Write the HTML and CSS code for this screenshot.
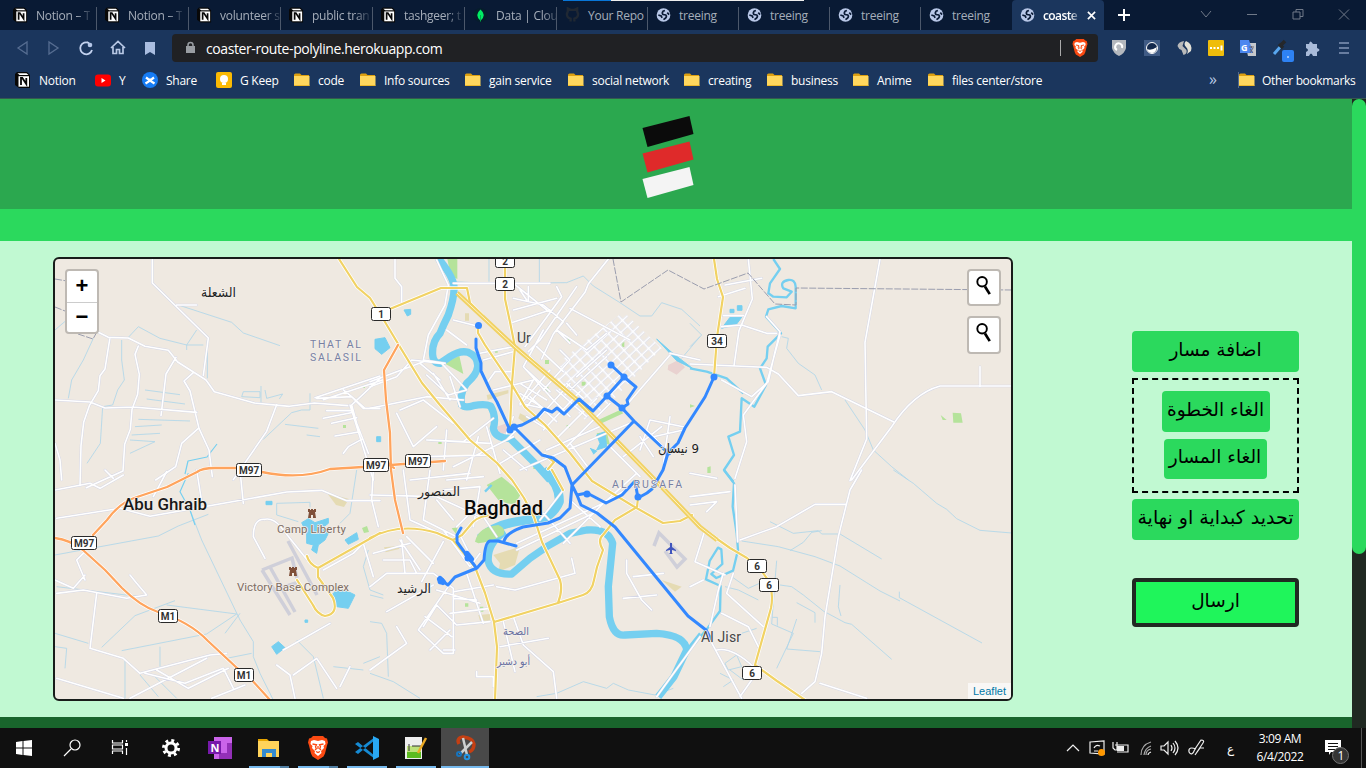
FILE: index.html
```html
<!DOCTYPE html>
<html lang="en">
<head>
<meta charset="utf-8">
<title>coaster-route-polyline</title>
<link rel="stylesheet" href="styles.css">
</head>
<body>
<svg class="defs" aria-hidden="true">
  <symbol id="notion" viewBox="0 0 16 16"><path d="M0 2 2 0h10l3 3v13H4l-4-3z" fill="#080808"/><path d="M2.500 1.300h9L13.500 3H4.500z" fill="#fff"/><path d="M3.500 4.200h10.500v10.500H3.500z" fill="#fff"/><path d="M6 13V6h1.300l4 6V6" fill="none" stroke="#080808" stroke-width="1.800"/></symbol>
  <symbol id="folder" viewBox="0 0 16 14"><path d="M0 2q0-1.500 1.500-1.500H6L7.500 2H15v3H0z" fill="#dda011"/><path d="M0 3h15.500v9.300q0 .7-.7.7H.700Q0 13 0 12.300z" fill="#ffd75e"/><path d="M0 12.500h15.500" stroke="#eeb92c"/></symbol>
  <symbol id="globe" viewBox="0 0 16 16"><circle cx="8" cy="8" r="7.300" fill="#b9c8e8"/><path d="M9.500 3.200 7.500 4Q6 6 7.500 7.500l3 .5q1.500 1.500-.5 3.500L8 13M2.500 8l3 1 1 2M12 5.500l2 2" fill="none" stroke="#0b1b36" stroke-width="1.800"/></symbol>
  <symbol id="brave" viewBox="0 0 20 24"><path d="M5 0h10l2 2 2 .5 1 4-1 3-2 8-1.500 3L10 24l-5.500-3.500L3 17.500l-2-8-1-3 1-4L3 2z" fill="#fb4a12"/><path d="m3 5 3-1 4 1 4-1 3 1 .5 3-2 2 .5 2-3 3 .5 2L10 20l-3.500-3 .5-2-3-3 .5-2-2-2z" fill="#fff"/><path d="m4.500 8 4 .8-1 2 .8 2L7 14M15.500 8l-4 .8 1 2-.8 2L13 14M8 15.500l2 1 2-1M10 10v3" fill="none" stroke="#fb4a12" stroke-width="1.300"/></symbol>
</svg>

<header class="browser">
  <div class="tabs">
    <div class="tab"><svg><use href="#notion"/></svg><span>Notion – T</span></div>
    <div class="tab"><svg><use href="#notion"/></svg><span>Notion – T</span></div>
    <div class="tab"><svg><use href="#notion"/></svg><span>volunteer s</span></div>
    <div class="tab"><svg><use href="#notion"/></svg><span>public tran</span></div>
    <div class="tab"><svg><use href="#notion"/></svg><span>tashgeer; t</span></div>
    <div class="tab"><svg viewBox="0 0 16 16"><circle cx="8" cy="8" r="7.500" fill="#061e2b"/><path d="M8 2q7 6 0 12-7-6 0-12" fill="#00ed64"/><path d="M8 8v7" stroke="#00a84c"/></svg><span>Data | Clou</span></div>
    <div class="tab"><svg viewBox="0 0 16 16"><path d="M6 15v-3q-4-1-4-5l1-3V1l3 1.500h4L13 1v3l1 3q0 4-4 5v3" fill="none" stroke="#202833" stroke-width="2.500"/></svg><span>Your Repo</span></div>
    <div class="tab plain"><svg><use href="#globe"/></svg><span>treeing</span></div>
    <div class="tab plain"><svg><use href="#globe"/></svg><span>treeing</span></div>
    <div class="tab plain"><svg><use href="#globe"/></svg><span>treeing</span></div>
    <div class="tab plain last"><svg><use href="#globe"/></svg><span>treeing</span></div>
    <div class="tab active"><svg><use href="#globe"/></svg><span>coaste</span><svg class="close" viewBox="0 0 10 10"><path d="m1 1 8 8M9 1 1 9" stroke="#fff" stroke-width="1.800"/></svg></div>
    <svg class="window-tools" viewBox="1103 0 263 30"><path d="M1117 15h12M1123 9v12" stroke="#fff" stroke-width="2"/><path d="m1200 11 5 6 5-6M1246 14.500h10M1292 12h7v7h-7zM1295 12V9.500h7v7h-3M1338 9.500l10 10M1348 9.500l-10 10" fill="none" stroke="#707988"/></svg>
  </div>
  <i class="loading"></i>
  <div class="toolbar">
    <svg class="nav" viewBox="0 30 172 36"><path d="M27 42v12l-9-6zM49 42v12l9-6z" fill="none" stroke="#566d91" stroke-width="1.300"/><path d="M89 43a6 6 0 1 0 3 7M87 42l4 3" fill="none" stroke="#c3d2ef" stroke-width="1.800"/><circle cx="90" cy="45" r="2.300" fill="#b5c7e8"/><path d="m111 48 7-6.500 7 6.500M113 47v6.500h3.500v-4h3v4h3.500V47" fill="none" stroke="#b8c8e5" stroke-width="1.700"/><path d="M145 42h10v13l-5-3-5 3z" fill="#a9bde0"/></svg>
    <div class="address"><svg viewBox="0 0 12 14"><rect x="1" y="5" width="9" height="7" fill="#999da2"/><path d="M3 6V4a2.500 2.500 0 0 1 5 0v2" fill="none" stroke="#999da2" stroke-width="1.500"/></svg><span>coaster-route-polyline.herokuapp.com</span><i></i><svg class="lion"><use href="#brave"/></svg></div>
    <svg class="extensions" viewBox="1098 30 268 36"><path d="M1112 40h14v8q-1 5-7 8-6-3-7-8z" fill="#b4b8be"/><path d="M1117 50a3.500 3.500 0 1 1 5-2" fill="none" stroke="#fff" stroke-width="2"/><path d="M1144 40h16v16h-16z" fill="#405b85"/><circle cx="1152" cy="48" r="5.500" fill="#14294d" stroke="#fff"/><path d="M1147 49q4 2 10-2-1 6-5 6-4 0-5-4" fill="#fff"/><path d="M1184 41q-6 1-6.500 5 1 3 4 4l2 5q4-1 3-5l-4-4z" fill="#b8b9ba"/><path d="M1186 41q7 3 5 10l-4 3q2-4-1-7-3-3 0-6" fill="#e3e1d7"/><rect x="1208" y="40" width="16" height="16" rx="1" fill="#efbd0b"/><path d="M1210 48h2m1.500 0h2m1.500 0h2M1221.500 45.500v5" stroke="#fff" stroke-width="2"/><path d="M1245 43h11v13h-8" fill="#c5c8cc"/><path d="M1240 40h9l4 13h-13z" fill="#4c87ef"/><text x="1241" y="51" font-size="9" fill="#fff" font-weight="bold">G</text><path d="M1249 47h5M1251.500 46v2M1253 48l-3 5M1250 49l3 4" stroke="#667" fill="none"/><path d="m1274 54 7-8" stroke="#59a7ef" stroke-width="3"/><path d="m1279 44 4 4m-2-3 4-4" stroke="#25272a" stroke-width="3.500"/><rect x="1282" y="50" width="12" height="12" rx="2" fill="#2e82f4"/><path d="M1287 57h2" stroke="#fff"/><path d="M1306 44h3q1-5 4 0h4v4q5 2 0 4v4h-4q-2-5-4 0h-3v-4q4-2 0-4z" fill="#a9bbd9"/><path d="M1339 43h10M1339 48h10M1339 53h10" stroke="#8295b7" stroke-width="1.500"/></svg>
  </div>
  <nav class="bookmarks">
    <div class="w80"><svg><use href="#notion"/></svg>Notion</div>
    <div class="w47"><svg viewBox="0 0 16 16"><rect y="2.500" width="16" height="12" rx="3" fill="#f00"/><path d="m6.500 6 4 2.500-4 2.500z" fill="#fff"/></svg>Y</div>
    <div class="w74"><svg viewBox="0 0 16 16"><circle cx="8" cy="8" r="8" fill="#167cf5"/><path d="m3.500 11.500 4.500-3 4.500 3M4 5.500l2 1.500 2 1 2-1 2-1.500" fill="none" stroke="#fff" stroke-width="2.200"/></svg>Share</div>
    <div class="w78"><svg viewBox="0 0 16 16"><rect width="16" height="16" rx="2" fill="#fbba04"/><circle cx="8" cy="7" r="4" fill="#fff"/><path d="M6 12h4" stroke="#fff" stroke-width="2"/></svg>G Keep</div>
    <div class="w66"><svg><use href="#folder"/></svg>code</div><div class="w105"><svg><use href="#folder"/></svg>Info sources</div><div class="w103"><svg><use href="#folder"/></svg>gain service</div><div class="w116"><svg><use href="#folder"/></svg>social network</div><div class="w83"><svg><use href="#folder"/></svg>creating</div><div class="w86"><svg><use href="#folder"/></svg>business</div><div class="w75"><svg><use href="#folder"/></svg>Anime</div><div class="files"><svg><use href="#folder"/></svg>files center/store</div>
    <b>»</b><i></i><div class="other"><svg><use href="#folder"/></svg>Other bookmarks</div>
  </nav>
</header>

<div class="viewport">
  <div class="site">
    <div class="brand"><svg viewBox="640 114 56 86"><path d="m642.500 128 47-12 4 18-46 13z" fill="#0b0b0b"/><path d="m642.500 153.500 47-12 4 18-46 13z" fill="#df2a2a"/><path d="m642.500 179 47-12 4 18-46 13z" fill="#f4f4f4"/></svg></div>
    <div class="band"></div>
    <main>
      <section class="map">
        <svg viewBox="55 259 956 440">
          <defs>
            <pattern id="blocks" width="29" height="23" patternUnits="userSpaceOnUse" patternTransform="rotate(-43)"><path d="M0 4h29M4 0v23" stroke="#d5d7e6" stroke-width="8"/><path d="M0 4h29M4 0v23" stroke="#fff" stroke-width="5.500"/></pattern>
            <g id="streets">
              <g transform="translate(50 250) scale(.33333)">
                <path d="M307 27v72l168 165-15 112M380 165h60M145 247l30 15 60 2 50 25 70 12 28 35 85 54 25 35 120 34 105 10 75-10 100 8M15 450l105 6 45 18 85-3 190 16M180 262l-15 95-15 20-5 45-27 45-17 50-8 70-3 120M265 288l-10 25 13 60-5 60-17 45-5 60-17 45-5 80-110 50M378 322l-30 50-15 125M430 368l-28 25 18 30 27 112 30 65 10 80M445 535l-50 45-18 70-60 40M680 464l-30 80-100 145M795 443l195-65M820 449l180-60M905 465l85-80M800 445l105-5 35 35h50M880 420l25 20 40 35M905 465l15 55 35 90M830 482h75M820 505l83-17M845 520l75-17M855 558l75-13M880 610l15-20 40-22M165 660l25 25M15 580l15 50 5 60M900 465l70 225"/>
              </g>
              <g transform="translate(370 250) scale(.33333)">
                <path d="M200 30l35 75-10 60-50 90-15 75 65 10M0 410l80-30 45-50 90 10 75 80-55 15-65-60M0 475l170-35 110 10M90 480l70-30 90 70M80 490l50 100 70-60M75 25v60l20 25v45M250 100h290M250 210l80 20M230 240l60 45M430 180l130-35M430 145l90 20 60 50-20 25 90 60 60-50M420 220l120-40M430 100l100 80M450 120l20 30M475 110v45M560 110l15 30-110 150M620 110l-110 160-35 35M715 27l-60 75-10 25-95 125-35 75M330 310l100-20M340 330l90-25M350 400l25-35h50M370 420l120-30-40 70 70 15M450 400l80 50M450 430l80 50M540 360l-90 105M520 240l-60 110 90 100M600 330l-80 90M600 175l180 95M470 500l65 40M450 660l330-140M530 600l170-75M600 580l60 80M720 590l90 90M810 600l30-90 100 20M850 560l90-20M760 620l115-90M880 640l20-140M180 570l100 5 90-70M230 540l-10 120M160 620l200-5M250 650l180-90M290 690l35-130M400 600l70 60M390 640l120-70M350 530l40 140M170 570l190 10M0 395l160-60M900 310l90 20M900 315l-130 150M560 240l40 40M590 220l30 35M570 300l30 30M500 290l80 75M480 320l80 75M470 360l70 65M620 380l90-80M600 420l110-100M590 400l50 45M560 420l90 80M540 440l60 60M470 470l40-50M660 480l30 40M810 560l40 60M830 540l50 50M240 380l30 90M190 370l50 80M150 340l60 50M430 500l-20 50M450 530l-40 40"/>
                <path d="M500 510l100-110M520 540l110-115M560 565l120-120M590 590l130-130M480 440l80 75" />
              </g>
              <g transform="translate(690 250) scale(.33333)">
                <path d="M0 342l230 10 35 20 60 65 100-12 185 90M175 27l12 120-40 95-15 105M105 105l110-20M85 140l80-25M570 27l-45 250 5 290-50 125M485 690l120-160q65-100 145-122h215M870 350v60M270 255l-40 145-70 95 10 80-35 110M230 200l40 45-15 60-20 90-50 45-90-50M100 197h60M95 230l60-5 75 25h30"/>
              </g>
              <g transform="translate(50 470) scale(.33333)">
                <path d="M20 145l190-30 90 24 410-73 105-5 75 31h100M140 370l-20 165 100 30 50 45 210-55 50-5M285 610l120 30 115-45 30 60M20 625l200 60M240 685l230-120M15 330l55 25 35-40M100 250l-20 20 25 60M20 370l80-10 130 25 60-10-30-35-20-25M320 600l95 55 120-60M485 685l100-40M645 265l-35-65q0-55 35-52 22-5 45 20l80 100M700 540l140-80M820 300l90-50 30-30 30 100M680 585l40 30 15 70M730 615l70-50 60 90M870 650l30-60M15 60l105-20 30 15 70-40M310 80l40-75M440 0l15 95M570 0l10 100M970 0l-5 90 20 80"/>
              </g>
              <g transform="translate(370 470) scale(.33333)">
                <path d="M0 75l200 5 130 60M100 0l20 150 100 45M180 0l-20 150 100 50M230 30l110-10M120 30l180-20M220 60l110-10M200 90l50 60M260 170l60-60 60 90M0 350l50-40h140l60 45v195h-30l-75-70 90-130M50 425l140-80M90 210l60 90M10 250l110-30M40 270h80l20 40M95 210l10 100M110 200l80 80M160 470l40-65 60 60 100-10M200 360l130 40M165 440l80 60M180 540l60-60M240 430l120-15M250 385l70 5M250 365l120-20M290 310l50 150M380 350l55 10 180-50-10-45M400 455l35 150M430 440l30 85 90 80 10 80M390 530l145-25M320 605v15h50v30M440 220l260-120 100-60M510 150l70-90M580 220l120-120 100-90M770 270v40l45 80 30 30M790 320l90-10M760 385l100-10M990 500l-130 180M220 540h35M220 180l80 110 30-40M265 185l40 80M220 215l-65 120M330 50l-20 120M440 240l230-110M520 130l80 90M600 90l90 80M0 600l110-80-30-50"/>
              </g>
              <g transform="translate(690 470) scale(.33333)">
                <path d="M515 0l-35 60-35 140-40 240-10 110-20 85-40 35M150 210l110-40 115-67h95M0 80l120-15M0 105l80-10-30 30M0 10l80 15M45 180l-30 95 90 40M130 310l-20 60 110 100M95 430l80 40 30 60M0 350l40-20M55 500l100 185M80 540q45-10 110 50M185 630l-35 50M390 640l140 45M135 45l8 170M100 310l-15 50-25 110"/>
              </g>
            </g>
            <g id="highways">
              <path d="M339 259 357 287 370 298 385 322 400 347 422 383 440 405 470 440 497 463 512 480 524 498 534 517 542 542 560 580Q563 590 558 603M385 311 441 288H467L470 303 482 315M478 327v6l7 12 27 40 13 22 20 18 25 28 22 28 41 25 30 17 17-2 12-6M505 259v40l5 23 5 25-3 36-2 44M714 259l3 20 6 18-6 40-3 40M370 538Q400 522 437 533L453 540 462 535 473 522Q480 515 495 515M453 540 475 567 485 593 494 622 497 647 495 700M494 622 558 603 583 595Q592 592 594 580L597 567 603 550Q597 540 603 535L615 520 637 507 638 498M380 533 318 568Q309 564 307 556M318 568v9L333 598Q339 614 325 616 317 614 313 605L297 580M552 470l11 20M700 527l30 21 17 10 16 15q12 14 8 35L755 665 777 681 805 700M545 455l9 7-6 7"/>
            </g>
            <g id="motorways"><path d="M55 538Q70 540 83 550L105 570 122 588Q140 606 158 612 190 622 208 641L237 668 250 678 270 700M93 535 107 520Q120 502 137 497L167 487 197 472Q202 468 215 468H237Q250 470 262 472 300 480 330 469L363 467 445 461M398 345 384 370 386 400 390 433 391 470 395 500 403 533M386 461l8 7"/></g>
          </defs>

          <g class="areas">
            <g transform="translate(370 250) scale(.33333)"><path d="M232 27h30v60l-20-10zM223 340l45-23 12 55zM680 550l30-5 10 40-30-10zM685 510l65-30 10 10-65 30zM590 265h10v10h-10zM525 330h12v12h-12zM635 395h12v12h-12zM755 275h8v16h-8zM590 525h10v8h-10zM205 572h10v10h-10zM375 300h8v8h-8zM525 410h10v15h-10zM490 645h20v12h-20z"/><path class="sand" d="M285 190h12v22h-12zM350 435l65-15v10l-62 20zM450 490l30 15-15 15-20-15z"/><path class="rose" d="M895 345l30-15 20 22-25 22-27-15zM380 530l30-10 5 25-25 10z"/></g>
            <g transform="translate(690 250) scale(.33333)"><path d="M752 495l18 15h-12zM788 488l25 2 5 28h-28zM0 463l15 5-15 5zM52 652l10-3v20H52z"/></g>
            <g transform="translate(370 470) scale(.33333)"><path d="M350 45l45-25 60 50-20 30-50-10zM245 175l18-3-5 20zM650 10l25 15M285 400h10v10h-10zM330 410h10v15h-10z"/><path class="sand" d="M370 255l80-25-15 55-50 20 5-25zM42 232l50-5-5 10-40 10zM325 435l35-3v20h-30zM875 330l60 20-20 15z"/></g>
            <path class="sand" d="M327 493l22 6-5 8-8-2z"/>
            <path d="M362 528l5-2 2 6-5 1zM363 385h2v3h-2zM343 425h3v3h-3z"/>
          </g>
          <g class="airport"><path d="M288 541l29 54M262 570l28 45M270 567l25 45M262 570l30-12 5 20M275 590l24-8M654 546l5-13 26 26-8 8-12-16"/></g>

          <g class="canals">
            <g transform="translate(50 250) scale(.33333)"><path d="M15 240l35-30M130 265l-30 65-35 60-10 55M385 165l160 52 35 32 110 38M472 270v115M235 262l30-32 65 35 80 20h50M410 300v-15l30-45M215 270v60l8 60-20 30-15 45-30 5-7 110-40 60M285 420l105 14M290 447l115 15M265 508l155 5M255 530l80-5M245 555l85-5M240 570l75 5-75 35M580 425h50v18l-55-3zM633 408v50M645 420l5 25 48-13-10 15M780 430v50h-25l-30 8-85 80M705 523l100 12M770 555l40 5"/></g>
            <g transform="translate(370 250) scale(.33333)"><path d="M250 95l100 5 240-2 50-20 30 30 80 50 60 40h35l30-40 60 20 55 50M508 27v70M357 25v70M990 260l-55 65"/></g>
            <g transform="translate(690 250) scale(.33333)"><path d="M275 260l20 5-5 30 35 45 50 35 20 45M465 450l60 90 25 60 55 50 50 40M0 220l35 35-35 35"/></g>
            <g transform="translate(50 470) scale(.33333)"><path d="M15 255l310-57 60-30 90-35M350 405l210 27-90 60-255 50M155 532l100-95 120-45M420 120l35 90 115 240 40 65v45l20 50 40 80M15 490l100 30M20 350l250 30M225 570v115M270 615l55 65M310 615l70 70M330 530v60M530 565l75-15M15 530l35 5-5 60M740 510l50 50 30 125M850 590l90 10M940 580l50-20M955 240l-15 50 20 70 40 15M680 100l100-3v15M680 100v35l65 20M570 430l-45 60M920 0l-20 130-30 30"/></g>
            <g transform="translate(370 470) scale(.33333)"><path d="M0 375l40 10M0 455l35 5 15 30 5 130M0 610l70 25 80 50M500 680l60-10 80-35 70 20 20-15 45 20 80 15 55-20"/></g>
            <g transform="translate(690 470) scale(.33333)"><path d="M610 0l60 40 70 60 30 18 30 28 70 35 95 8M240 155l70 35 75-8 10 10h55l125 75M155 213l110 17 110 30 75 28 80 50 40 25 60 30M628 365v18l248 136M300 242l40-25 25-30 30-5M450 345l-5 65 8 28M270 345l35 5 35 25 60 48 65 35 20 5 120 105M320 398l55 30v30M260 272l-5 60-10 130 65 28-50 105M247 442h15v25M125 320l50 35 45-20 30 10M105 350l40 10 60 30M320 447l-30 90 100 8M200 475l-45 15M105 580l35-25 15 35-40 10zM90 610l40 20-30 20M120 600l40 30"/></g>
          </g>
          <g class="water">
            <g transform="translate(370 250) scale(.33333)"><path class="tigris" d="M205 25Q250 80 252 110T235 195Q220 225 210 250 185 275 188 315 190 340 210 340L240 320Q270 300 295 307 325 320 323 350 320 375 290 400 268 430 275 465 285 475 310 467 345 460 362 468 380 500 370 535 375 565 420 565L460 605 500 645 540 690"/><path class="blob" d="M15 268l30-5 15 30-25 20-20-17zM102 180l20-2v15l-10 5zM20 560h12v15H20zM680 555l25-10 5 45-30 10 10-20zM660 595l20 8-10 10M860 267l45 40 65 50-50-25z"/></g>
            <g transform="translate(370 470) scale(.33333)"><path class="tigris broad" d="M520 0Q570 45 568 95 555 125 530 140L440 155Q375 165 330 205"/><path class="tigris" d="M405 185Q350 220 355 275 365 315 425 312L480 265 530 230 600 190 650 180Q715 175 728 220L715 350 718 440Q730 500 765 495L860 490Q945 495 950 540L912 620 865 680"/><path class="island" d="M315 215q10-45 70-50 25 10 15 30-35 20-75 25zM373 65l15-30 20 5 0 45-20-10zM400 80q20-20 40 0l-5 20q-15 5-35-5z"/><path d="M990 490l-40 50M345 65l20-20" class="diyala"/></g>
            <g transform="translate(690 250) scale(.33333)"><path class="diyala" d="M250 27l20 30-30 43-5 30 15 10 40 2 15-17-25-10q-12-20 15-25 20-3 22 20v65l-42-7-40 10-7 22 45 50-40 40-3 35-20 30 18 50-35 65-38-25-5 100-35 15 17 55-30 45 28 35M0 355l50 10 60 20 50 45"/><path class="blob" d="M95 235l25-33h35l-15 20zM120 178h12v10h-12zM142 167h14v14h-14z"/></g>
            <g transform="translate(690 470) scale(.33333)"><path class="diyala" d="M102 0l30 40-4 70 12 80 4 50-15 62-50 22-15-12 33-30-3-44-10-5-25 40-11 55 44 20-2 75-40 55-50 60"/></g>
            <g transform="translate(50 470) scale(.33333)"><path class="blob" d="M648 94h18v10h-18zM755 158l20-12 20 12 40-13v15l-20 15 20 15-10 20-20 15-5 25-15-10 5-15-20-5v-30zM885 210l35-22 5 20-30 15zM665 530l20-15 20 18-25 20zM765 450h8v7h-8zM845 375l20-20 30 10 20 10-20 40-35-5z"/><path d="M435 165l-15-45-30-55 20-45 5-10" class="creek"/></g>
            <path d="M217 444l-10 13-19 4-3 13" class="creek narrow"/>
          </g>

          <g transform="translate(370 250) scale(.33333)"><path d="M575 330l185-145 115 110-155 165-70 55-55-60-40-35z" fill="url(#blocks)"/></g>
          <use href="#streets" class="street-case"/><use href="#streets" class="street"/>
          <use href="#highways" class="highway-case"/><use href="#highways" class="highway"/>
          <path class="express" d="M457 293 515 347 577 400 655 480 700 527 717 540"/><path class="median" d="M457 293 515 347 577 400 655 480 700 527 717 540"/>
          <use href="#motorways" class="highway-case"/><use href="#motorways" class="motorway"/>
          <path class="boundary" d="M55 279l12 2M55 307l10 4M78 334l15 5 5-9M613 259l8 43 47-32 36 19 44-16 27 31 21 1v-17l216 2"/>

          <g class="routes">
            <path d="M476 339v9l5 15v8L490 390 497 402 510 430M514 427 522 425 537 417 544 409 552 412 557 408 564 414 579 399 593 411 607 396 624 377 636 387 627 400 628 404 622 408 607 396M611 365 624 377M622 408 634 421 668 453 678 443 685 428 705 397 714 377M668 453 663 470 652 489 647 493 638 498 636 487 638 483 635 481 622 495 606 503 587 493 577 495M634 421 572 485M514 427 542 455 553 458 565 467 572 485 570 508 560 518 548 523 523 527Q506 533 504 541M572 485 577 495 581 505 597 513 615 527 688 616 706 630 711 639M516 546 498 541H490Q485 542 484 560L477 568 455 577 448 585 441 580M461 528 457 535V542L468 557 475 566"/>
            <path d="M467 554l4 5M440 579l3 3" class="thick"/>
            <g><circle cx="478.500" cy="325.500" r="3.500"/><circle cx="510" cy="430" r="3.500"/><circle cx="514" cy="427" r="3.500"/><circle cx="611" cy="365" r="3.500"/><circle cx="624" cy="377" r="3.500"/><circle cx="607" cy="396" r="3.500"/><circle cx="622" cy="408" r="3.500"/><circle cx="714" cy="377" r="3.500"/><circle cx="668" cy="452" r="3.500"/><circle cx="587" cy="494" r="3.500"/><circle cx="638" cy="497" r="3.500"/><circle cx="468" cy="558" r="3.500"/><circle cx="441" cy="581" r="3.500"/></g>
          </g>
          <g class="labels">
            <text x="201" y="297" class="ar" textLength="35" lengthAdjust="spacingAndGlyphs">الشعلة</text><text x="310" y="348" class="area" textLength="52">THAT AL</text><text x="310" y="361" class="area" textLength="52">SALASIL</text>
            <text x="517" y="343" class="town">Ur</text><text x="658" y="453" class="ar" textLength="41" direction="rtl" text-anchor="end" lengthAdjust="spacingAndGlyphs">9 نيسان</text><text x="612" y="488" class="area" textLength="71">AL RUSAFA</text>
            <text x="123" y="510" class="city" textLength="84" lengthAdjust="spacingAndGlyphs">Abu Ghraib</text><text x="464" y="515" class="capital" textLength="79" lengthAdjust="spacingAndGlyphs">Baghdad</text>
            <text x="418" y="496" class="ar" textLength="42" lengthAdjust="spacingAndGlyphs">المنصور</text><text x="397" y="593" class="ar" textLength="34" lengthAdjust="spacingAndGlyphs">الرشيد</text><text x="503" y="635" class="ar small" textLength="26" lengthAdjust="spacingAndGlyphs">الصحة</text><text x="497" y="665" class="ar small" textLength="33" lengthAdjust="spacingAndGlyphs">أبو دشير</text>
            <text x="277" y="533" class="base" textLength="69">Camp Liberty</text><text x="237" y="591" class="base" textLength="112" lengthAdjust="spacingAndGlyphs">Victory Base Complex</text><text x="701" y="642" class="town" textLength="40">Al Jisr</text>
            <path class="castle" d="M308 509h2v1h1v-1h2v1h1v-1h2v3h-1l1 6h-3v-3h-2v3h-3l1-6h-1zM289 567h2v1h1v-1h2v1h1v-1h2v3h-1l1 6h-3v-3h-2v3h-3l1-6h-1z"/><path d="M670 543h2v4l4 3v1l-4-1v3l1 1h-4l1-1v-3l-4 1v-1l4-3z" fill="#4055bd"/>
          </g>
          <g class="shields">
            <g transform="translate(381 314)"><rect x="-9.500" y="-6.500" width="19" height="13" rx="2"/><text>1</text></g><g transform="translate(505 261)"><rect x="-9.500" y="-6.500" width="19" height="13" rx="2"/><text>2</text></g><g transform="translate(505 284)"><rect x="-9.500" y="-6.500" width="19" height="13" rx="2"/><text>2</text></g><g transform="translate(717 341)"><rect x="-9.500" y="-6.500" width="19" height="13" rx="2"/><text>34</text></g>
            <g transform="translate(249 470)"><rect x="-12.500" y="-6.500" width="25" height="13" rx="2"/><text>M97</text></g><g transform="translate(376 465)"><rect x="-12.500" y="-6.500" width="25" height="13" rx="2"/><text>M97</text></g><g transform="translate(418 461)"><rect x="-12.500" y="-6.500" width="25" height="13" rx="2"/><text>M97</text></g><g transform="translate(84 543)"><rect x="-12.500" y="-6.500" width="25" height="13" rx="2"/><text>M97</text></g>
            <g transform="translate(168 616)"><rect x="-9.500" y="-6.500" width="19" height="13" rx="2"/><text>M1</text></g><g transform="translate(244 675)"><rect x="-9.500" y="-6.500" width="19" height="13" rx="2"/><text>M1</text></g><g transform="translate(757 566)"><rect x="-9.500" y="-6.500" width="19" height="13" rx="2"/><text>6</text></g><g transform="translate(769 585)"><rect x="-9.500" y="-6.500" width="19" height="13" rx="2"/><text>6</text></g><g transform="translate(752 673)"><rect x="-9.500" y="-6.500" width="19" height="13" rx="2"/><text>6</text></g>
          </g>
        </svg>
        <div class="zoom"><span>+</span><span>−</span></div>
        <div class="finders"><div><svg viewBox="0 0 16 22"><circle cx="6" cy="6" r="5" fill="none" stroke="#000" stroke-width="2"/><path d="m9 11 5 8" stroke="#000" stroke-width="2.800"/></svg></div><div><svg viewBox="0 0 16 22"><circle cx="6" cy="6" r="5" fill="none" stroke="#000" stroke-width="2"/><path d="m9 11 5 8" stroke="#000" stroke-width="2.800"/></svg></div></div>
        <div class="leaflet">Leaflet</div>
      </section>
      <aside>
        <button>اضافة مسار</button>
        <div class="cancel"><button class="step">الغاء الخطوة</button><button class="path">الغاء المسار</button></div>
        <button class="ends">تحديد كبداية او نهاية</button>
        <button class="send">ارسال</button>
      </aside>
    </main>
    <footer></footer>
  </div>
  <div class="scroll"><i></i></div>
</div>

<div class="taskbar">
  <svg class="apps" viewBox="0 728 490 40">
    <path d="m16 742 6.500-1v6.500H16zM23.500 741l8.500-1v7.500h-8.500zM16 748.500h6.500v6.500l-6.500-1zM23.500 748.500H32v7.500l-8.500-1z" fill="#fff"/>
    <g fill="none" stroke="#fff" stroke-width="1.200"><circle cx="75" cy="745" r="5"/><path d="m71 749-7 7M112.500 740v3h10v-3M112.500 754v-3h10v3M112.500 745h10v4h-10zM126.500 740v2M126.500 748v7"/><circle cx="171" cy="748" r="5" stroke-width="3"/><circle cx="171" cy="748" r="7.500" stroke-width="3" stroke-dasharray="2.900 3"/></g><path d="M125 743h3v3h-3z" fill="#fff"/>
    <path d="M214 737h18v22h-18z" fill="#ca64ea"/><path d="M227 743h5v5h-5zM227 748h5v11h-13v-6h8z" fill="#9330b8"/><path d="M208 741h13v13h-13z" fill="#7719aa"/><text x="210.500" y="752" fill="#fff" font-weight="bold" font-size="11">N</text>
    <path d="M258 739h9l2 2h10v16h-21z" fill="#e7a500"/><path d="M258 741h21v16h-21z" fill="#ffd35a"/><path d="M262 749h14v8h-4v-4h-6v4h-4z" fill="#348bd0"/>
    <use href="#brave" x="308" y="736" width="20" height="24"/>
    <path d="m355 744 3-2 17 14v3zM355 752l3 2 17-14v-3z" fill="#168bd4"/><path d="m373 736 6 3v18l-6 3z" fill="#29a9f5"/>
    <path d="M405 737h17v22h-17z" fill="#eee"/><path d="M407 752h14v6h-14z" fill="#5cbb20"/><path d="M407 746h14v6h-14z" fill="#bde17a"/><path d="M409 744v7M412 746h9" stroke="#333"/><path d="m418 753 8-15" stroke="#edaa24" stroke-width="2.500"/>
    <path d="M441 728h48v40h-48z" fill="#494949"/><path d="M459 744q-3-6 4-7 10 1 11 7 0 6-5 8" fill="none" stroke="#c43f13" stroke-width="3.500"/><path d="m463 738 4 17M472 742l-12 12" stroke="#ccd0d1" stroke-width="2.500"/><circle cx="459" cy="754" r="2" fill="none" stroke="#1674be" stroke-width="2"/><circle cx="467" cy="757" r="2.300" fill="none" stroke="#2594e2" stroke-width="2"/>
    <path d="M249 767h31M298 767h31M347 767h40M396 767h40M441 767h48" stroke="#76b9ed" stroke-width="2"/><path d="M280 767h9M329 767h9" stroke="#517fa3" stroke-width="2"/>
  </svg>
  <svg class="tray" viewBox="1060 728 180 40"><g fill="none" stroke="#eee" stroke-width="1.200"><path d="m1067 751 6-6 6 6M1090 742l14-1v13l-14-1zM1094 751h4M1094 748q2-4 6-2M1115 745h13v7h-11M1113 742v6l2 2h2v-8M1148 755q0-2 3-3M1161 746h3l4-4v12l-4-4h-3zM1171 745q2 3 0 6M1173 743q4 5 0 10M1175 741q6 7 0 14M1196 749q-8-3-7 3 3 5 6-3l6-9q4 0 2 3l-8 12 5-7h4"/><path d="M1141 755q0-10 10-13M1144 755q1-7 7-9M1146 755q0-5 5-6" stroke="#aaa"/></g><path d="M1117 746h7v5h-7z" fill="#eee"/><circle cx="1101.500" cy="752.500" r="3.500" fill="#ff9800"/><text x="1227" y="753" class="lang">ع</text></svg>
  <div class="clock">3:09 AM<br>6/4/2022</div>
  <svg class="notify" viewBox="1320 728 46 40"><path d="M1325 740h16v12h-10l-2 3v-3h-4z" fill="#fff"/><path d="M1328 743.500h10M1328 746.500h10M1328 749.500h7" stroke="#111"/><circle cx="1340.500" cy="755.500" r="8" fill="#353535" stroke="#747474"/><text x="1337.500" y="760" font-size="12" fill="#fff">1</text><path d="M1361.500 728v40" stroke="#555"/></svg>
</div>
</body>
</html>
```

FILE: styles.css
```css
* { box-sizing: border-box; }
body { margin: 0; width: 1366px; height: 768px; overflow: hidden; font-family: "Open Sans", "Noto Sans", "DejaVu Sans", sans-serif; }
svg { display: block; flex: none; }
.defs { position: absolute; width: 0; height: 0; }
.browser { height: 98px; background: #1b365d; color: #fff; position: relative; }
.tabs { height: 30px; display: flex; background: #091a34; }
.tab { flex: none; width: 92px; height: 30px; display: flex; align-items: center; padding-left: 13px; gap: 8px; font-size: 12px; letter-spacing: -.25px; color: #a6aeba; position: relative; }
.tab:first-child { width: 97px; }
.tab:nth-child(n+7) { width: 91px; }
.tab:nth-child(n+2) { padding-left: 8px; }
.tab::after { content: ""; position: absolute; right: 0; top: 7px; bottom: 0; width: 1px; background: #4c586b; }
.tab > svg { width: 15px; height: 16px; }
.tab span { white-space: nowrap; mask-image: linear-gradient(90deg, #000 75%, rgba(0, 0, 0, .2)); }
.tab.plain span, .tab:nth-child(7) span { mask-image: none; }
.tab.last::after, .tab.active::after { display: none; }
.tab.active { width: 92px; padding-left: 8px; background: #1b365d; color: #fff; border-radius: 4px 4px 0 0; font-weight: 600; letter-spacing: -.6px; }
.tab.active span { width: 36px; }
.tab .close { width: 9px; height: 9px; margin-left: 0; }
.window-tools { width: 263px; height: 30px; }
.loading { position: absolute; left: 563px; top: 0; width: 241px; height: 1px; background: linear-gradient(90deg, #0876d8 48px, #eee 48px); }
.toolbar { display: flex; height: 36px; align-items: center; }
.nav { width: 172px; height: 36px; }
.address { width: 926px; height: 28px; border-radius: 4px; background: #202124; display: flex; align-items: center; padding-left: 13px; }
.address > svg:first-child { width: 12px; height: 14px; }
.address span { font-size: 14px; margin-left: 9px; letter-spacing: -.4px; white-space: nowrap; }
.address i { width: 1px; height: 16px; background: #aaa; margin-left: auto; }
.address .lion { width: 16px; height: 18px; margin: 0 10px 0 11px; }
.extensions { width: 268px; height: 36px; }
.bookmarks { height: 32px; display: flex; align-items: center; padding: 0 0 4px 15px; font-size: 12px; letter-spacing: -.25px; white-space: nowrap; }
.bookmarks div { display: flex; align-items: center; gap: 8px; flex: none; }
.bookmarks svg { width: 16px; height: 16px; }
.bookmarks b { margin: -3px 0 0 167px; font-size: 16px; font-weight: 400; width: 20px; color: #b8c9e6; }
.bookmarks i { width: 1px; height: 16px; margin-left: 9px; background: #536b8d; }
.bookmarks .other { margin-left: 0; gap: 7px; letter-spacing: -.35px; }
.bookmarks .w80 { width: 80px; } .bookmarks .w47 { width: 47px; } .bookmarks .w74 { width: 74px; } .bookmarks .w78 { width: 78px; }
.bookmarks .w66 { width: 66px; } .bookmarks .w105 { width: 105px; } .bookmarks .w103 { width: 103px; } .bookmarks .w116 { width: 116px; }
.bookmarks .w83 { width: 83px; } .bookmarks .w86 { width: 86px; } .bookmarks .w75 { width: 75px; } .bookmarks .files { width: 114px; }

.viewport { height: 630px; display: flex; border-top: 1px solid #34594f; }
.site { width: 1352px; }
.brand { height: 110px; background: #2ba84f; padding: 15px 0 0 640px; }
.brand svg { width: 56px; height: 86px; }
.band { height: 32px; background: #2bd95d; }
main { height: 476px; background: #c1f9d2; padding: 16px 0 0 53px; display: flex; align-items: flex-start; }
footer { height: 11px; background: #19652c; }
.scroll { width: 14px; background: #202922; }
.scroll i { display: block; height: 455px; border-radius: 7px; background: #2bd95d; }
.map { width: 960px; height: 444px; border: 2px solid #181d1a; border-radius: 6px; overflow: hidden; position: relative; background: #efe9e1; }
.map > svg { width: 956px; height: 440px; }
.zoom { position: absolute; left: 10px; top: 10px; width: 34px; height: 65px; border: 2px solid #beb9b3; border-radius: 4px; background: #fff; display: grid; grid-template-rows: 31px 30px; font: bold 22px "Liberation Sans"; text-align: center; line-height: 30px; }
.zoom span + span { border-top: 1px solid #ccc; line-height: 27px; }
.finders { position: absolute; right: 10px; top: 10px; display: flex; flex-direction: column; gap: 9px; }
.finders div { width: 34px; height: 38px; border: 2px solid #beb9b3; border-radius: 4px; background: #fff; display: grid; place-items: center; padding-bottom: 3px; }
.finders div:first-child { height: 37px; margin-bottom: 1px; }
.finders svg { width: 16px; height: 21px; }
.leaflet { position: absolute; right: 0; bottom: 0; width: 43px; height: 16px; background: #f9f7f5; color: #0078a8; font: 11px/16px "Liberation Sans"; text-align: center; }

aside { width: 167px; margin: 74px 0 0 119px; display: flex; flex-direction: column; }
button { width: 167px; height: 41px; padding: 0 0 5px; border: 0; border-radius: 4px; background: #2bd95d; color: #000; font: 18.500px "DejaVu Sans", sans-serif; white-space: nowrap; direction: rtl; }
.cancel { height: 115px; margin: 6px 0; padding: 11px 0; border: 2px dashed #000; display: flex; flex-direction: column; align-items: center; gap: 7px; }
.cancel button { height: 40px; }
.cancel .step { width: 108px; height: 41px; }
.cancel .path { width: 103px; margin-right: 1px; }
.ends { font-size: 19px; }
.send { height: 49px; margin-top: 38px; border: 4px solid #202922; background: #1ff55b; }

.areas { fill: #b5e39b; } .sand { fill: #e5dbb3; } .rose { fill: #e9d2d0; }
.airport { fill: none; stroke: #cfcfd9; stroke-width: 3.500; }
.canals { fill: none; stroke: #b0d7e9; stroke-width: 2.600; stroke-linejoin: round; }
.water { fill: none; stroke: #75cff0; stroke-linejoin: round; }
.tigris { stroke-width: 22; } .tigris.broad { stroke-width: 27; } .diyala { stroke-width: 7; } .creek { stroke-width: 3.500; } .creek.narrow { stroke-width: 1.200; }
.water .blob { fill: #75cff0; stroke-width: 3; }
.water .island { fill: #b5e39b; stroke: none; }
.street, .street-case, .highway, .highway-case, .motorway { fill: none; stroke-linejoin: round; stroke-linecap: round; }
.street-case { stroke: #d5d7e6; stroke-width: 7.500; } .street { stroke: #fff; stroke-width: 4.800; }
.highway-case { stroke: #fff; stroke-width: 3.600; } .highway { stroke: #f1d264; stroke-width: 2.200; } .motorway { stroke: #ffa45d; stroke-width: 2.300; }
.express { fill: none; stroke: #f1d264; stroke-width: 4.600; } .median { fill: none; stroke: #fff4c8; stroke-width: 1; }
.boundary { fill: none; stroke: #9a9dae; stroke-width: 1; stroke-dasharray: 7 1.500; }
.labels { font-family: Roboto, "DejaVu Sans", sans-serif; }
.labels text { stroke: #f3efea; stroke-width: 1.500px; stroke-linejoin: round; paint-order: stroke; fill: #333; }
.labels .ar { font: 13px "DejaVu Sans"; fill: #222; }
.labels .small { font-size: 10.500px; fill: #6870a0; }
.labels .area { font-size: 10.500px; fill: #7780a2; letter-spacing: 1px; }
.labels .town { font-size: 14px; fill: #464646; }
.labels .city { font-size: 16.500px; font-weight: 500; fill: #181818; }
.labels .capital { font-size: 20px; font-weight: 500; fill: #080808; }
.labels .base { font-size: 11.500px; fill: #806d62; }
.castle { fill: #805039; }
.shields rect { fill: #fff; stroke: #292929; stroke-width: 1; }
.shields text { font: bold 10px Roboto; text-anchor: middle; fill: #333; transform: translateY(3.500px); }
.routes { fill: none; stroke: #3388ff; stroke-width: 3; stroke-linecap: round; stroke-linejoin: round; }
.routes circle { fill: #3388ff; stroke: none; } .routes .thick { stroke-width: 6; }

.taskbar { height: 40px; background: #101010; color: #fff; display: flex; }
.apps { width: 490px; height: 40px; }
.tray { width: 180px; height: 40px; margin-left: 570px; }
.lang { fill: #fff; font: 12px "DejaVu Sans"; }
.clock { width: 80px; font-size: 12px; line-height: 18px; padding-top: 2px; letter-spacing: -.4px; text-align: center; }
.notify { width: 46px; height: 40px; }
```
